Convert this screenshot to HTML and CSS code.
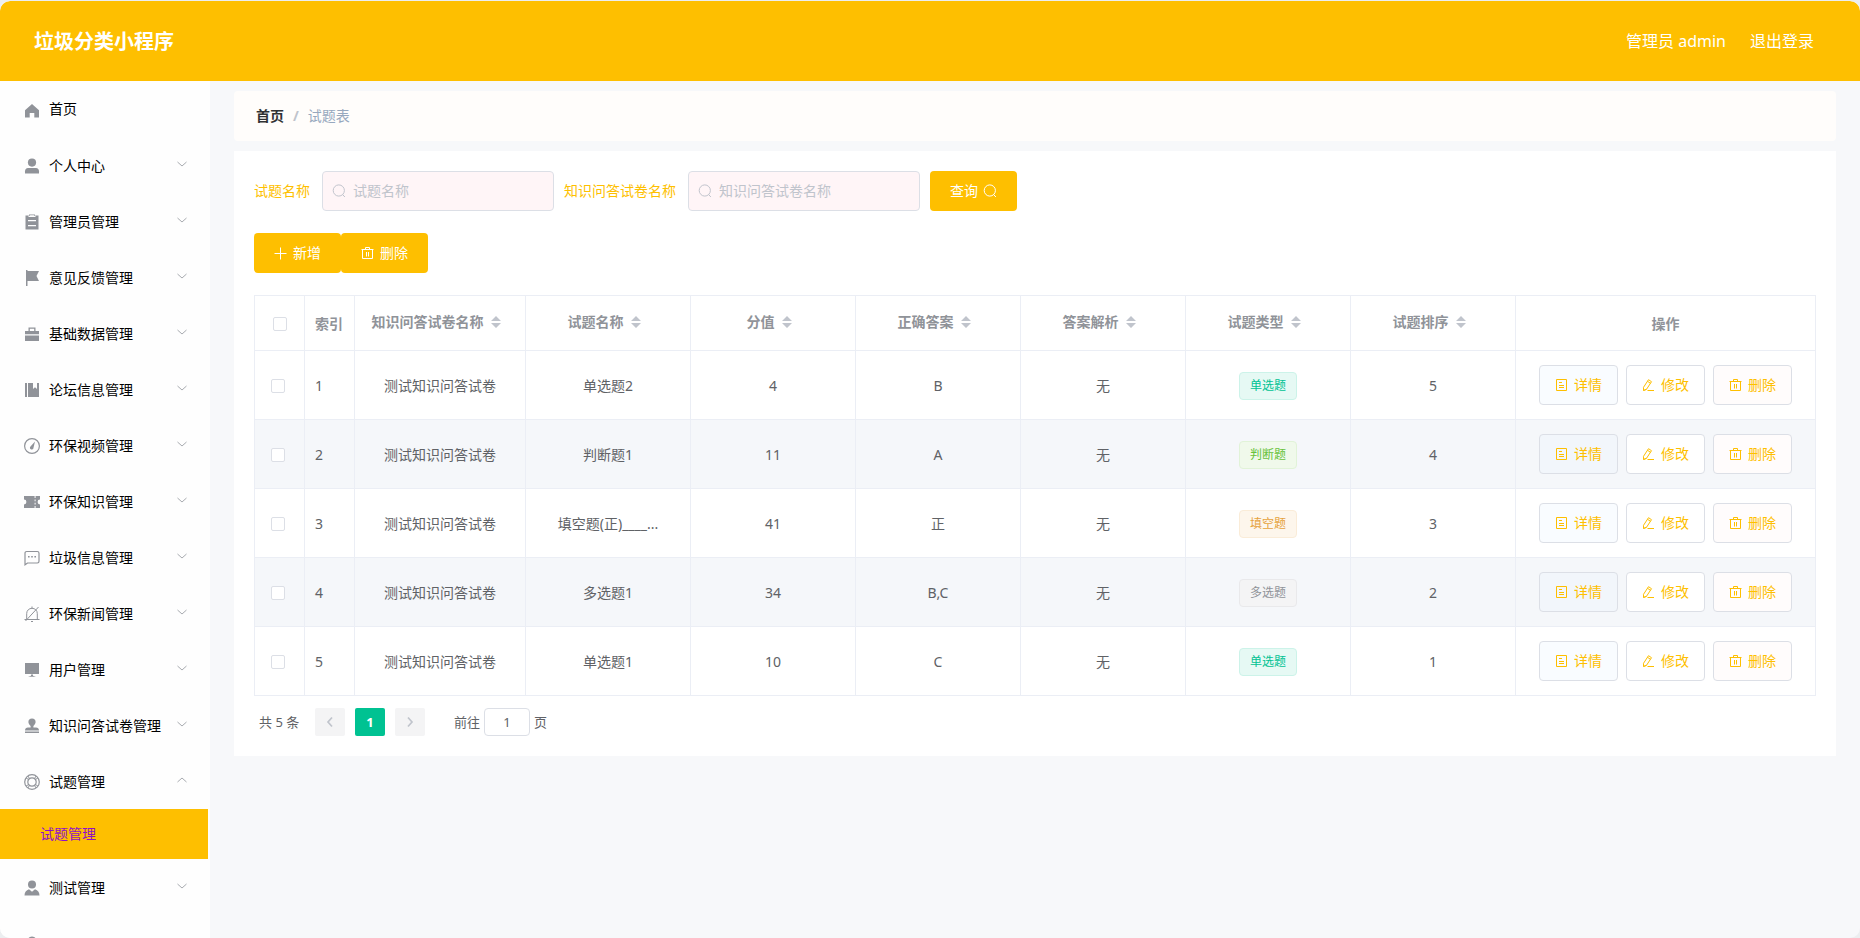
FILE: index.html
```html
<!DOCTYPE html>
<html lang="zh-CN">
<head>
<meta charset="utf-8">
<title>垃圾分类小程序</title>
<link rel="stylesheet" href="styles.css">
</head>
<body>
<svg class="sprite" aria-hidden="true">
  <symbol id="i-home" viewBox="0 0 16 16"><path fill="currentColor" d="M8 1 1 7.200V14.500h4.700v-4.600h4.600v4.600H15V7.200z"/></symbol>
  <symbol id="i-user" viewBox="0 0 16 16"><circle fill="currentColor" cx="8" cy="4.600" r="4.100"/><path fill="currentColor" d="M1 15.500v-2.200C1 11.400 2.200 10 4 10h8c1.800 0 3 1.400 3 3.300v2.200z"/></symbol>
  <symbol id="i-order" viewBox="0 0 16 16"><path fill="currentColor" fill-rule="evenodd" d="M5 .5h6v1h3.500v14h-13v-14H5zM4.500 3h7V1.800H10v-.5H6v.5H4.500zM4 6v1.200h8V6zm0 5v1.200h8V11z"/></symbol>
  <symbol id="i-flag" viewBox="0 0 16 16"><path fill="currentColor" d="M2 0h1.500v16H2zM3.500 1H15l-2.500 5L15 11H3.500z"/></symbol>
  <symbol id="i-goods" viewBox="0 0 16 16"><path fill="currentColor" fill-rule="evenodd" d="M4.500 1.500h7V5H15v3.300H1V5h3.500zM5.800 2.800V5h4.400V2.800zM1 9.500h14V15H1z"/></symbol>
  <symbol id="i-book" viewBox="0 0 16 16"><path fill="currentColor" d="M1 1h2v14H1zM4 1h5v6l2-1.800L13 7V1h2v14H4z"/></symbol>
  <symbol id="i-odometer" viewBox="0 0 16 16"><circle cx="8" cy="8" r="7.400" fill="none" stroke="currentColor" stroke-width="1.200"/><path fill="currentColor" d="m11 3.500-1.500 6.200a1.800 1.800 0 1 1-2.800-1.500z"/></symbol>
  <symbol id="i-ticket" viewBox="0 0 16 16"><path fill="currentColor" d="M0 2h10.600v2h1V2H16v3.600a2.400 2.400 0 0 0 0 4.800V14h-4.400v-2h-1v2H0v-3.600a2.400 2.400 0 0 0 0-4.800zM10.600 5.500v1.700h1V5.500zm0 3.300v1.700h1V8.800z" fill-rule="evenodd"/></symbol>
  <symbol id="i-chat" viewBox="0 0 16 16"><path fill="none" stroke="currentColor" stroke-width="1.200" d="M1 14.800V3.200C1 2.200 1.700 1.500 2.700 1.500h10.600c1 0 1.700.7 1.700 1.700v8.100c0 1-.7 1.700-1.700 1.700H3.500z"/><path fill="currentColor" d="M4 6h1.600v1.600H4zm3.200 0h1.600v1.600H7.200zm3.200 0H12v1.600h-1.600z"/></symbol>
  <symbol id="i-bell" viewBox="0 0 16 16"><path fill="none" stroke="currentColor" d="M.5 13.500h15M2.700 13.500V7.500C2.700 4.500 5 2.300 8 2.300s5.300 2.200 5.300 5.200v6M8 .5v1.800M7 15.500h2M1.500 15 14.500 1"/></symbol>
  <symbol id="i-screen" viewBox="0 0 16 16"><path fill="currentColor" d="M1 1h14v11H1zM7 12.500h2v1.300l3 1H4l3-1z"/></symbol>
  <symbol id="i-stamp" viewBox="0 0 16 16"><path fill="currentColor" d="M6.600 8C5.300 6.700 4.400 5.600 4.400 4a3.600 3.600 0 0 1 7.200 0c0 1.600-.9 2.700-2.200 4v1.500H12c1.800 0 3 1.200 3 3H1c0-1.800 1.200-3 3-3h2.600zM1 13.500h14V15H1z"/></symbol>
  <symbol id="i-help" viewBox="0 0 16 16"><g fill="none" stroke="currentColor" stroke-width="1.200"><circle cx="8" cy="8" r="7.300"/><circle cx="8" cy="8" r="4.200"/></g><path stroke="currentColor" d="m2.200 4.200 2.600 1.300M4.200 2.200l1.300 2.600M13.800 4.200l-2.600 1.300M11.800 2.200l-1.300 2.600M2.200 11.800l2.600-1.300M4.200 13.800l1.300-2.600M13.800 11.800l-2.600-1.300M11.800 13.800l-1.300-2.600"/></symbol>
  <symbol id="i-custom" viewBox="0 0 16 16"><circle fill="currentColor" cx="8" cy="4.500" r="4"/><path fill="currentColor" d="M.5 15.500c0-3.500 1.700-5.300 4.500-6.300l3 2.500 3-2.500c2.800 1 4.500 2.800 4.500 6.300z"/></symbol>
  <symbol id="i-down" viewBox="0 0 12 12"><path fill="none" stroke="currentColor" d="m1.500 4 4.500 4 4.500-4"/></symbol>
  <symbol id="i-up" viewBox="0 0 12 12"><path fill="none" stroke="currentColor" d="m1.500 8 4.500-4 4.500 4"/></symbol>
  <symbol id="i-left" viewBox="0 0 12 12"><path fill="none" stroke="currentColor" stroke-width="1.700" d="M8 1.500 4 6l4 4.500"/></symbol>
  <symbol id="i-right" viewBox="0 0 12 12"><path fill="none" stroke="currentColor" stroke-width="1.700" d="m4 1.500 4 4.500-4 4.500"/></symbol>
  <symbol id="i-search" viewBox="0 0 14 14"><circle cx="6.800" cy="6.500" r="5.600" fill="none" stroke="currentColor"/><path stroke="currentColor" d="m10.600 10.500 2.300 2.500"/></symbol>
  <symbol id="i-plus" viewBox="0 0 14 14"><path fill="none" stroke="currentColor" d="M6.500 1.500v12M.5 7.500h12"/></symbol>
  <symbol id="i-trash" viewBox="0 0 14 14"><path fill="none" stroke="currentColor" d="M.5 3.500h12M4.500 3.500v-2h4v2M1.500 3.500v9h10v-9M5.500 6v4.500M7.500 6v4.500"/></symbol>
  <symbol id="i-doc" viewBox="0 0 14 14"><path fill="none" stroke="currentColor" d="M1.500 1.500h10v11h-10zM4 4.500h3M4 7.500h5M4 9.500h5"/></symbol>
  <symbol id="i-edit" viewBox="0 0 14 14"><path fill="none" stroke="currentColor" d="M1.500 12.500V9.300L6.500 1.700l3 2L4.500 11.300zM5.500 3.300l3 2M5.500 12.500h6.500M1.500 12.500l3-1.200"/></symbol>
  <symbol id="i-sort" viewBox="0 0 10 14"><path fill="currentColor" d="m5 1 5 5H0zM5 13l5-5H0z"/></symbol>
</svg>
<div class="app">
  <header class="topbar">
    <h1 class="brand">垃圾分类小程序</h1>
    <div class="account"><span>管理员 admin</span><a class="logout" href="#">退出登录</a></div>
  </header>
  <div class="body">
    <nav class="sidebar">
      <a class="item home" href="#"><svg class="ico"><use href="#i-home"/></svg><span class="name">首页</span></a>
      <a class="item" href="#"><svg class="ico"><use href="#i-user"/></svg><span class="name">个人中心</span><svg class="arrow"><use href="#i-down"/></svg></a>
      <a class="item" href="#"><svg class="ico"><use href="#i-order"/></svg><span class="name">管理员管理</span><svg class="arrow"><use href="#i-down"/></svg></a>
      <a class="item" href="#"><svg class="ico"><use href="#i-flag"/></svg><span class="name">意见反馈管理</span><svg class="arrow"><use href="#i-down"/></svg></a>
      <a class="item" href="#"><svg class="ico"><use href="#i-goods"/></svg><span class="name">基础数据管理</span><svg class="arrow"><use href="#i-down"/></svg></a>
      <a class="item" href="#"><svg class="ico"><use href="#i-book"/></svg><span class="name">论坛信息管理</span><svg class="arrow"><use href="#i-down"/></svg></a>
      <a class="item" href="#"><svg class="ico"><use href="#i-odometer"/></svg><span class="name">环保视频管理</span><svg class="arrow"><use href="#i-down"/></svg></a>
      <a class="item" href="#"><svg class="ico"><use href="#i-ticket"/></svg><span class="name">环保知识管理</span><svg class="arrow"><use href="#i-down"/></svg></a>
      <a class="item" href="#"><svg class="ico"><use href="#i-chat"/></svg><span class="name">垃圾信息管理</span><svg class="arrow"><use href="#i-down"/></svg></a>
      <a class="item" href="#"><svg class="ico"><use href="#i-bell"/></svg><span class="name">环保新闻管理</span><svg class="arrow"><use href="#i-down"/></svg></a>
      <a class="item" href="#"><svg class="ico"><use href="#i-screen"/></svg><span class="name">用户管理</span><svg class="arrow"><use href="#i-down"/></svg></a>
      <a class="item" href="#"><svg class="ico"><use href="#i-stamp"/></svg><span class="name">知识问答试卷管理</span><svg class="arrow"><use href="#i-down"/></svg></a>
      <a class="item" href="#"><svg class="ico"><use href="#i-help"/></svg><span class="name">试题管理</span><svg class="arrow"><use href="#i-up"/></svg></a>
      <a class="subitem" href="#">试题管理</a>
      <a class="item" href="#"><svg class="ico"><use href="#i-custom"/></svg><span class="name">测试管理</span><svg class="arrow"><use href="#i-down"/></svg></a>
      <a class="item" href="#" aria-label="用户"><svg class="ico"><use href="#i-user"/></svg></a>
    </nav>
    <main class="main">
      <div class="crumbs"><a class="crumb-home" href="#">首页</a><span class="sep">/</span><span class="crumb-here">试题表</span></div>
      <section class="card">
        <form class="filters">
          <label for="q-name">试题名称</label>
          <div class="field"><svg class="i14"><use href="#i-search"/></svg><input id="q-name" type="text" placeholder="试题名称"></div>
          <label for="q-paper">知识问答试卷名称</label>
          <div class="field"><svg class="i14"><use href="#i-search"/></svg><input id="q-paper" type="text" placeholder="知识问答试卷名称"></div>
          <button class="btn primary" type="button">查询<svg class="i14"><use href="#i-search"/></svg></button>
        </form>
        <div class="tools">
          <button class="btn primary" type="button"><svg class="i14"><use href="#i-plus"/></svg>新增</button>
          <button class="btn primary" type="button"><svg class="i14"><use href="#i-trash"/></svg>删除</button>
        </div>
        <table class="grid">
          <colgroup><col class="c-sm"><col class="c-sm"><col class="c-paper"><col><col><col><col><col><col><col class="c-ops"></colgroup>
          <thead>
            <tr>
              <th><input type="checkbox" aria-label="全选"></th>
              <th class="idx">索引</th>
              <th><span class="sortable">知识问答试卷名称<svg class="sort"><use href="#i-sort"/></svg></span></th>
              <th><span class="sortable">试题名称<svg class="sort"><use href="#i-sort"/></svg></span></th>
              <th><span class="sortable">分值<svg class="sort"><use href="#i-sort"/></svg></span></th>
              <th><span class="sortable">正确答案<svg class="sort"><use href="#i-sort"/></svg></span></th>
              <th><span class="sortable">答案解析<svg class="sort"><use href="#i-sort"/></svg></span></th>
              <th><span class="sortable">试题类型<svg class="sort"><use href="#i-sort"/></svg></span></th>
              <th><span class="sortable">试题排序<svg class="sort"><use href="#i-sort"/></svg></span></th>
              <th>操作</th>
            </tr>
          </thead>
          <tbody>
            <tr>
              <td class="pick"><input type="checkbox" aria-label="选择第1行"></td><td class="idx">1</td><td>测试知识问答试卷</td><td>单选题2</td><td>4</td><td>B</td><td>无</td><td><span class="tag teal">单选题</span></td><td>5</td>
              <td class="acts"><div class="ops"><button class="btn view" type="button"><svg class="i14"><use href="#i-doc"/></svg>详情</button><button class="btn edit" type="button"><svg class="i14"><use href="#i-edit"/></svg>修改</button><button class="btn del" type="button"><svg class="i14"><use href="#i-trash"/></svg>删除</button></div></td>
            </tr>
            <tr>
              <td class="pick"><input type="checkbox" aria-label="选择第2行"></td><td class="idx">2</td><td>测试知识问答试卷</td><td>判断题1</td><td>11</td><td>A</td><td>无</td><td><span class="tag green">判断题</span></td><td>4</td>
              <td class="acts"><div class="ops"><button class="btn view" type="button"><svg class="i14"><use href="#i-doc"/></svg>详情</button><button class="btn edit" type="button"><svg class="i14"><use href="#i-edit"/></svg>修改</button><button class="btn del" type="button"><svg class="i14"><use href="#i-trash"/></svg>删除</button></div></td>
            </tr>
            <tr>
              <td class="pick"><input type="checkbox" aria-label="选择第3行"></td><td class="idx">3</td><td>测试知识问答试卷</td><td>填空题(正)____...</td><td>41</td><td>正</td><td>无</td><td><span class="tag orange">填空题</span></td><td>3</td>
              <td class="acts"><div class="ops"><button class="btn view" type="button"><svg class="i14"><use href="#i-doc"/></svg>详情</button><button class="btn edit" type="button"><svg class="i14"><use href="#i-edit"/></svg>修改</button><button class="btn del" type="button"><svg class="i14"><use href="#i-trash"/></svg>删除</button></div></td>
            </tr>
            <tr>
              <td class="pick"><input type="checkbox" aria-label="选择第4行"></td><td class="idx">4</td><td>测试知识问答试卷</td><td>多选题1</td><td>34</td><td>B,C</td><td>无</td><td><span class="tag gray">多选题</span></td><td>2</td>
              <td class="acts"><div class="ops"><button class="btn view" type="button"><svg class="i14"><use href="#i-doc"/></svg>详情</button><button class="btn edit" type="button"><svg class="i14"><use href="#i-edit"/></svg>修改</button><button class="btn del" type="button"><svg class="i14"><use href="#i-trash"/></svg>删除</button></div></td>
            </tr>
            <tr>
              <td class="pick"><input type="checkbox" aria-label="选择第5行"></td><td class="idx">5</td><td>测试知识问答试卷</td><td>单选题1</td><td>10</td><td>C</td><td>无</td><td><span class="tag teal">单选题</span></td><td>1</td>
              <td class="acts"><div class="ops"><button class="btn view" type="button"><svg class="i14"><use href="#i-doc"/></svg>详情</button><button class="btn edit" type="button"><svg class="i14"><use href="#i-edit"/></svg>修改</button><button class="btn del" type="button"><svg class="i14"><use href="#i-trash"/></svg>删除</button></div></td>
            </tr>
          </tbody>
        </table>
        <div class="pager">
          <span class="total">共 5 条</span>
          <button class="page" type="button" disabled aria-label="上一页"><svg class="i12"><use href="#i-left"/></svg></button>
          <button class="page current" type="button">1</button>
          <button class="page" type="button" disabled aria-label="下一页"><svg class="i12"><use href="#i-right"/></svg></button>
          <label class="jump">前往<input type="text" value="1">页</label>
        </div>
      </section>
    </main>
  </div>
</div>
</body>
</html>
```

FILE: styles.css
```css
* { box-sizing: border-box; }
body {
  margin: 0;
  background: #eceef0;
  color: #606266;
  font: 14px/20px "Noto Sans", "Noto Sans CJK SC", sans-serif;
}
a { color: inherit; text-decoration: none; }
button, input { font: inherit; }
.sprite { display: none; }

.app {
  display: flex;
  flex-direction: column;
  height: 100vh;
  border-top: 1px solid #eceef0;
  border-radius: 10px;
  overflow: hidden;
  background: #f7f8fa;
}
.topbar {
  flex: none;
  display: flex;
  align-items: center;
  justify-content: space-between;
  height: 80px;
  padding: 0 46px 0 34px;
  background: #febf00;
  border-radius: 10px 10px 0 0;
  color: #fff;
}
.brand { margin: 0; padding-top: 2px; font-size: 20px; line-height: 28px; font-weight: 700; }
.account { display: flex; gap: 24px; font-size: 16px; line-height: 24px; }

.body { flex: 1; display: flex; min-height: 0; }
.sidebar {
  flex: none;
  width: 210px;
  overflow: hidden;
  background: #fefefe;
  color: #000;
}
.item {
  display: flex;
  align-items: center;
  height: 56px;
  padding: 2px 22px 0 24px;
}
.home { padding-top: 0; }
.ico { width: 16px; height: 16px; margin-right: 9px; color: #909399; }
.home .ico { margin-top: 3px; }
.name { flex: 1; }
.arrow { width: 12px; height: 12px; margin-bottom: 4px; color: #a8abb0; }
.subitem {
  display: flex;
  align-items: center;
  height: 50px;
  margin-right: 2px;
  padding-left: 40px;
  background: #febf00;
  color: #9010c8;
}

.main { flex: 1; min-width: 0; padding: 10px 24px; }
.crumbs {
  display: flex;
  align-items: center;
  height: 50px;
  margin-bottom: 10px;
  padding: 0 22px;
  border-radius: 4px;
  background: #fffdfb;
}
.crumb-home { color: #303133; font-weight: 700; }
.sep { margin: 0 9px; color: #c0c4cc; font-weight: 700; }
.crumb-here { color: #97a8be; }

.card { padding: 20px; background: #fff; }
.filters { display: flex; align-items: center; gap: 10px; color: #febf00; }
.field { position: relative; width: 232px; margin-left: 2px; }
.field svg { position: absolute; left: 10px; top: 13px; color: #c0c4cc; }
.field input {
  display: block;
  width: 100%;
  height: 40px;
  padding: 0 15px 2px 30px;
  border: 1px solid #dcdfe6;
  border-radius: 4px;
  background: #fff5f7;
  color: #606266;
}
.field input::placeholder { color: #c0c4cc; opacity: 1; }

.btn {
  display: inline-flex;
  align-items: center;
  justify-content: center;
  gap: 5px;
  height: 40px;
  padding: 0 14px;
  border: 1px solid #dcdfe6;
  border-radius: 4px;
  background: #fff;
  color: #febf00;
  white-space: nowrap;
}
.primary { width: 87px; border: 0; background: #febf00; color: #fff; }
.i14 { flex: none; width: 14px; height: 14px; }
.i12 { width: 12px; height: 12px; }
.tools { display: flex; margin: 22px 0; }

.grid {
  width: 100%;
  table-layout: fixed;
  border-spacing: 0;
  border-top: 1px solid #ebeef5;
  border-left: 1px solid #ebeef5;
}
.c-sm { width: 50px; }
.c-paper { width: 171px; }
.c-ops { width: 300px; }
.grid th, .grid td {
  padding: 2px 0 0;
  border-right: 1px solid #ebeef5;
  border-bottom: 1px solid #ebeef5;
  text-align: center;
  vertical-align: middle;
}
.grid th { height: 55px; color: #909399; font-weight: 700; }
.grid td { height: 69px; }
.grid .acts { padding-top: 0; }
.grid tbody tr:nth-child(even) { background: #f5f7fa; }
.grid .idx { padding-left: 10px; text-align: left; }
.grid .pick { padding-right: 4px; }
.grid input {
  display: block;
  width: 14px;
  height: 14px;
  margin: 0 auto;
  appearance: none;
  border: 1px solid #dcdfe6;
  border-radius: 2px;
  background: #fff;
}
.sortable { display: inline-flex; align-items: center; gap: 7px; padding: 0 8px 4px 0; }
.sort { width: 10px; height: 14px; color: #c0c4cc; }
.tag {
  display: inline-block;
  height: 28px;
  padding: 0 10px;
  border: 1px solid;
  border-radius: 4px;
  font-size: 12px;
  line-height: 26px;
}
.teal { background: #e6f9f4; border-color: #ccf3e9; color: #00c292; }
.green { background: #f0f9eb; border-color: #e1f3d8; color: #67c23a; }
.orange { background: #fdf6ec; border-color: #faecd8; color: #e6a23c; }
.gray { background: #f4f4f5; border-color: #e9e9eb; color: #909399; }
.ops { display: flex; justify-content: center; gap: 8px; }
.ops .btn { width: 79px; }
.ops .view { background: rgba(236, 245, 255, 0.3); }
.ops .del { background: #fffcfc; }

.pager {
  display: flex;
  align-items: center;
  gap: 10px;
  margin-top: 12px;
  padding-left: 5px;
  font-size: 13px;
}
.page {
  display: grid;
  place-items: center;
  width: 30px;
  height: 28px;
  padding: 0;
  border: 0;
  border-radius: 2px;
  background: #f4f4f5;
  color: #c0c4cc;
}
.current { background: #00c292; color: #fff; font-weight: 700; }
.total { width: 46px; white-space: nowrap; }
.jump { display: flex; align-items: center; gap: 4px; margin-left: 19px; }
.jump input {
  width: 46px;
  height: 28px;
  padding: 0;
  border: 1px solid #dcdfe6;
  border-radius: 4px;
  background: #fff;
  color: #606266;
  text-align: center;
}
```
